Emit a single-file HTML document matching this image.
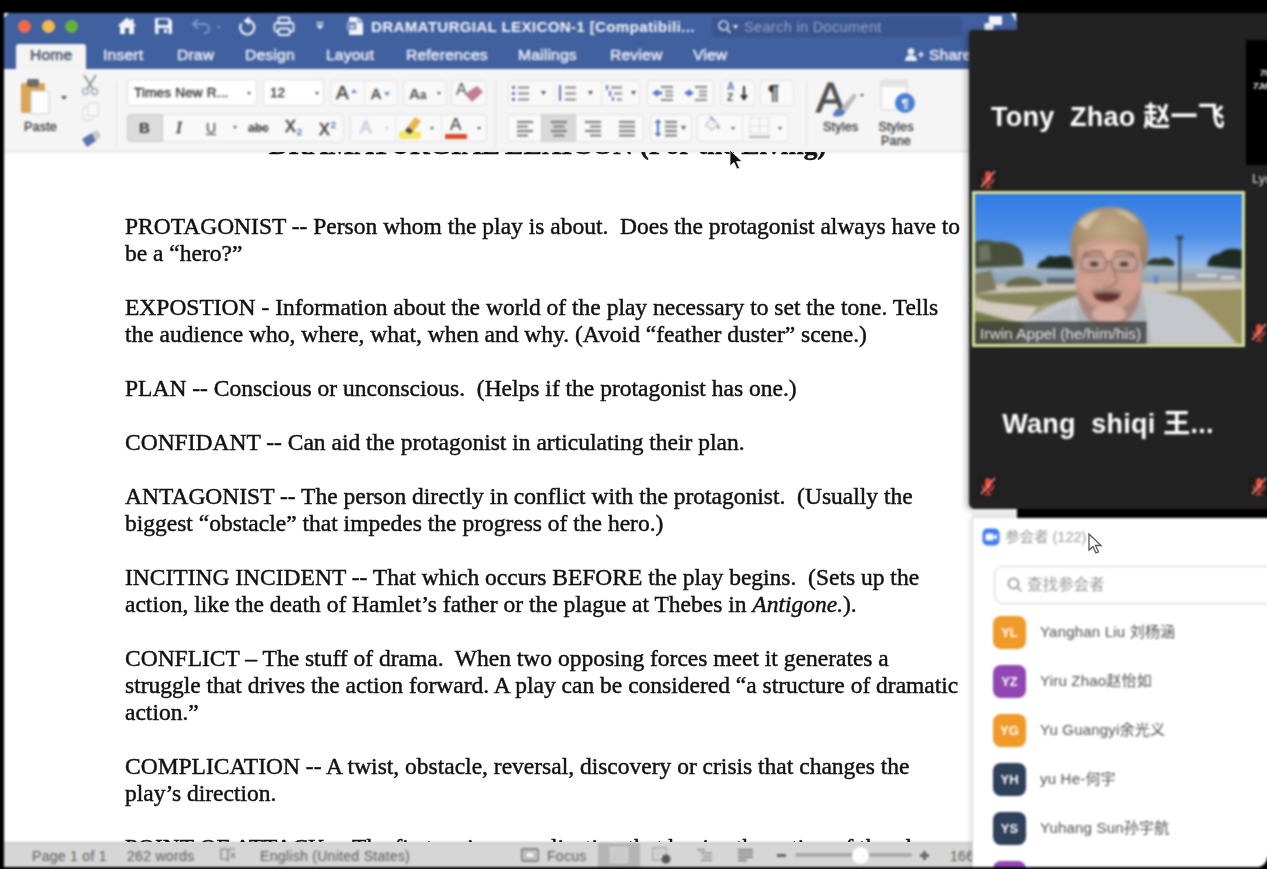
<!DOCTYPE html>
<html><head><meta charset="utf-8">
<title>Screen share</title>
<style>
html,body{margin:0;padding:0;background:#000;}
body{width:1267px;height:869px;position:relative;overflow:hidden;font-family:"Liberation Sans","Noto Sans CJK SC",sans-serif;}
.abs{position:absolute;}
#word{position:absolute;z-index:0;left:4px;top:13px;width:1013px;height:854px;background:#fff;overflow:hidden;}
#titlebar{position:absolute;left:0;top:0;width:1013px;height:56px;background:#40609f;}
.tl{position:absolute;top:7px;width:13px;height:13px;border-radius:50%;}
.tab{position:absolute;top:33px;color:#e4e9f3;font-size:15.5px;line-height:18px;font-weight:400;-webkit-text-stroke:0.5px #e4e9f3;white-space:nowrap;letter-spacing:0.25px;}
#hometab{position:absolute;left:12px;top:31px;width:70px;height:26px;background:#f4f4f4;border-radius:3px 3px 0 0;}
#ribbon{position:absolute;left:0;top:56px;width:1013px;height:84px;background:linear-gradient(#f5f5f6 0,#f5f5f6 81px,#e4e4e4 82px,#ececec 83px,#fafafa 84px);z-index:2;}
.grp{position:absolute;height:26px;background:#f9f9f9;border:1px solid #e1e1e1;border-radius:4px;box-sizing:border-box;}
.box{position:absolute;height:27px;background:#fff;border:1px solid #dcdcdc;border-radius:4px;box-sizing:border-box;}
.rt{position:absolute;color:#3a3a3a;white-space:nowrap;}
#doc{position:absolute;left:0;top:138px;width:1013px;height:692px;background:#fff;overflow:hidden;}
.ln{position:absolute;left:121px;margin-top:-1px;font-family:"Liberation Serif",serif;font-size:23.5px;line-height:27px;color:#111;white-space:pre;-webkit-text-stroke:0.45px #111;}
#status{position:absolute;left:0;top:829px;width:1013px;height:25px;background:#d6d6d6;border-top:1px solid #bdbdbd;}
.st{position:absolute;top:5px;font-size:14px;line-height:16px;color:#5e5e5e;white-space:nowrap;letter-spacing:0.3px;}

#vpanel{position:absolute;left:969px;top:30px;width:320px;height:479px;background:#222;border-radius:4px 0 0 6px;box-shadow:-2px 1px 6px rgba(0,0,0,0.35);}
#vtop{position:absolute;left:1017px;top:13px;width:280px;height:20px;background:#222;border-radius:0 0 0 0;}
.vname{position:absolute;left:0;width:278px;text-align:center;color:#fff;font-weight:700;font-size:27px;letter-spacing:0.25px;line-height:32px;white-space:pre;font-family:"Liberation Sans","Noto Sans CJK SC",sans-serif;}
#ppanel{position:absolute;left:972px;top:518px;width:325px;height:349px;background:#fff;border-left:1px solid #d8d8d8;box-shadow:-2px 0 5px rgba(0,0,0,0.12);overflow:hidden;box-sizing:border-box;}
.av{position:absolute;left:20px;width:33px;height:33px;border-radius:8px;color:#fff;font-weight:700;font-size:13px;line-height:33px;text-align:center;}
.pn{position:absolute;left:67px;font-size:15px;letter-spacing:0.2px;line-height:20px;color:#505050;white-space:nowrap;font-family:"Liberation Sans","Noto Sans CJK SC",sans-serif;}
</style></head>
<body><div id="all" style="position:absolute;left:0;top:0;width:1300px;height:869px;filter:blur(0.8px);">
<div id="word">
  <div id="titlebar">
    <div class="tl" style="left:14px;background:#f0694a;"></div>
    <div class="tl" style="left:38px;background:#f5b74e;"></div>
    <div class="tl" style="left:61px;background:#66b13c;"></div>
    
    <svg class="abs" style="left:112px;top:3px;" width="22" height="20" viewBox="0 0 22 20"><path d="M11 1.500 L1.500 10 L4 10 L4 18 L9 18 L9 12 L13 12 L13 18 L18 18 L18 10 L20.500 10 Z" fill="#f2f4f9"/><rect x="15" y="3" width="2.500" height="5" fill="#f2f4f9"/></svg>
    <svg class="abs" style="left:150px;top:4px;" width="19" height="18" viewBox="0 0 19 18"><path d="M1 2 q0 -1 1 -1 h13 l3 3 v12 q0 1 -1 1 h-15 q-1 0 -1 -1z" fill="#f2f4f9"/><rect x="4" y="2.500" width="10" height="5.500" fill="#40609f"/><rect x="4.500" y="11" width="10" height="6" fill="#40609f"/><rect x="10" y="12" width="3" height="4" fill="#f2f4f9"/></svg>
    <svg class="abs" style="left:187px;top:4px;" width="32" height="18" viewBox="0 0 32 18"><path d="M7 2 L2 7 L7 12 M2 7 H12 Q18 7 18 12 Q18 16 13 16" fill="none" stroke="#8097c6" stroke-width="1.800"/><circle cx="28" cy="10" r="1.300" fill="#8097c6"/></svg>
    <svg class="abs" style="left:233px;top:3px;" width="22" height="21" viewBox="0 0 22 21"><path d="M4.500 7.500 A7 7 0 1 0 11 4.500" fill="none" stroke="#f2f4f9" stroke-width="2.200"/><path d="M12.500 0.500 L6.500 4.800 L12.500 9 Z" fill="#f2f4f9"/></svg>
    <svg class="abs" style="left:269px;top:3px;" width="22" height="21" viewBox="0 0 22 21"><rect x="5.500" y="1.500" width="11" height="6" rx="1" fill="none" stroke="#f2f4f9" stroke-width="1.800"/><rect x="1.500" y="7" width="19" height="8.500" rx="2" fill="none" stroke="#f2f4f9" stroke-width="1.800"/><rect x="5.500" y="12.500" width="11" height="6.500" rx="1" fill="#40609f" stroke="#f2f4f9" stroke-width="1.800"/></svg>
    <svg class="abs" style="left:311px;top:8px;" width="10" height="10" viewBox="0 0 10 10"><rect x="1.500" y="1" width="7" height="1.600" fill="#dfe5f1"/><path d="M1 4 h8 l-4 4.500z" fill="#dfe5f1"/></svg>
    <svg class="abs" style="left:343px;top:3px;" width="18" height="20" viewBox="0 0 18 20"><path d="M3 1 h8 l5 5 v12 q0 1 -1 1 h-12 q-1 0 -1 -1 v-16 q0 -1 1 -1z" fill="#f2f4f9"/><path d="M11 1 v5 h5" fill="none" stroke="#40609f" stroke-width="1"/><rect x="0.500" y="6" width="9" height="8" rx="1" fill="#40609f" stroke="#f2f4f9" stroke-width="0.800"/><text x="5" y="12.500" font-size="6.500" font-weight="700" fill="#f2f4f9" text-anchor="middle" font-family="Liberation Sans, sans-serif">W</text></svg>
    <svg class="abs" style="left:980px;top:2px;" width="20" height="18" viewBox="0 0 20 18"><rect x="5" y="1" width="13" height="9" fill="#f2f4f9"/><rect x="0.500" y="8" width="9" height="7" rx="1" fill="#e8ecf5"/></svg>
    <svg class="abs" style="left:900px;top:33px;" width="22" height="18" viewBox="0 0 22 18"><circle cx="7" cy="5.500" r="3.300" fill="#e4e9f3"/><path d="M1 15 q0 -6 6 -6 q6 0 6 6z" fill="#e4e9f3"/><path d="M14 8.500 h6 M17 5.500 v6" stroke="#e4e9f3" stroke-width="1.700"/></svg>
    <div class="abs" style="left:0;top:0;width:0;height:0;border-top:5px solid #e8ecf5;border-right:5px solid transparent;"></div><div class="abs" style="left:1007px;top:0;width:0;height:0;border-top:9px solid #e8ecf5;border-left:5px solid transparent;"></div>
    <div id="hometab"></div>
    <div class="tab" style="left:26px;color:#4b5568;-webkit-text-stroke:0.5px #4b5568;">Home</div>
    <div class="tab" style="left:99px;">Insert</div>
    <div class="tab" style="left:173px;">Draw</div>
    <div class="tab" style="left:241px;">Design</div>
    <div class="tab" style="left:322px;">Layout</div>
    <div class="tab" style="left:402px;">References</div>
    <div class="tab" style="left:514px;">Mailings</div>
    <div class="tab" style="left:606px;">Review</div>
    <div class="tab" style="left:689px;">View</div>
    <div class="tab" style="left:925px;">Share</div>
    <div class="abs" style="left:367px;top:6px;color:#eef1f7;font-size:15px;line-height:16px;font-weight:700;letter-spacing:0.4px;white-space:nowrap;">DRAMATURGIAL LEXICON-1 [Compatibili...</div>
    <div class="abs" style="left:708px;top:4px;width:250px;height:20px;background:#3a5590;border-radius:4px;"></div>
    <div class="abs" style="left:740px;top:6px;color:#8fa2c8;font-size:14.5px;line-height:16px;letter-spacing:0.35px;white-space:nowrap;">Search in Document</div>
    <svg class="abs" style="left:713px;top:6px;" width="24" height="16" viewBox="0 0 24 16"><circle cx="6.500" cy="6.500" r="4.500" fill="none" stroke="#d5dcec" stroke-width="1.700"/><path d="M10 10 L13.500 14" stroke="#d5dcec" stroke-width="1.800"/><path d="M15.500 6 h6 l-3 4z" fill="#d5dcec"/></svg>
  </div>
  <div id="ribbon">
    <!-- paste -->
    <svg class="abs" style="left:14px;top:8px;" width="36" height="40" viewBox="0 0 36 40">
      <rect x="3" y="6" width="24" height="30" rx="2" fill="#d9a556"/>
      <rect x="9" y="2" width="12" height="8" rx="2" fill="#6d6d6d"/>
      <rect x="13" y="14" width="18" height="23" rx="1" fill="#fdfdfd" stroke="#cfcfcf" stroke-width="1"/>
    </svg>
    <div class="abs" style="left:57px;top:27px;width:0;height:0;border-left:3px solid transparent;border-right:3px solid transparent;border-top:4px solid #555;"></div>
    <div class="rt" style="left:20px;top:51px;font-size:12.5px;letter-spacing:0.2px;line-height:14px;-webkit-text-stroke:0.3px #3a3a3a;">Paste</div>
    <!-- scissors -->
    <svg class="abs" style="left:76px;top:5px;" width="20" height="22" viewBox="0 0 20 22">
      <path d="M4 1 L13 15 M16 1 L7 15" stroke="#8c8c8c" stroke-width="1.6" fill="none"/>
      <circle cx="5.5" cy="17.5" r="3" stroke="#9aa6bd" stroke-width="1.4" fill="none"/>
      <circle cx="14.5" cy="17.5" r="3" stroke="#9aa6bd" stroke-width="1.4" fill="none"/>
    </svg>
    <svg class="abs" style="left:77px;top:33px;" width="20" height="20" viewBox="0 0 20 20">
      <rect x="2" y="5" width="10" height="13" rx="1" fill="#f8f8f8" stroke="#dddddd" stroke-width="1.3"/>
      <rect x="7" y="1" width="10" height="13" rx="1" fill="#f8f8f8" stroke="#dddddd" stroke-width="1.3"/>
    </svg>
    <svg class="abs" style="left:76px;top:60px;" width="22" height="20" viewBox="0 0 22 20">
      <path d="M2 10 L12 4 L16 12 L7 18 Z" fill="#5c75a8"/>
      <path d="M12 4 L17 1 L21 7 L16 12 Z" fill="#c9c9c9"/>
    </svg>
    <div class="abs" style="left:112px;top:12px;width:1px;height:66px;background:#e3e3e3;"></div>
    <!-- font boxes -->
    <div class="box" style="left:123px;top:10px;width:130px;"></div>
    <div class="rt" style="left:130px;top:16px;font-size:13.5px;line-height:16px;letter-spacing:0.2px;color:#2c2c2c;-webkit-text-stroke:0.3px #2c2c2c;">Times New R...</div>
    <div class="abs" style="left:243px;top:23px;width:0;height:0;border-left:2.5px solid transparent;border-right:2.5px solid transparent;border-top:3.5px solid #555;"></div>
    <div class="box" style="left:259px;top:10px;width:61px;"></div>
    <div class="rt" style="left:266px;top:16px;font-size:13.5px;line-height:16px;color:#2c2c2c;-webkit-text-stroke:0.3px #2c2c2c;">12</div>
    <div class="abs" style="left:311px;top:23px;width:0;height:0;border-left:2.5px solid transparent;border-right:2.5px solid transparent;border-top:3.5px solid #555;"></div>
    <div class="grp" style="left:326px;top:11px;width:68px;"></div>
    <div class="rt" style="left:332px;top:13px;font-size:19px;line-height:22px;color:#444;-webkit-text-stroke:0.4px #444;">A</div>
    <div class="abs" style="left:347px;top:20px;width:0;height:0;border-left:3px solid transparent;border-right:3px solid transparent;border-bottom:4px solid #6c86b8;"></div>
    <div class="abs" style="left:360px;top:11px;width:1px;height:26px;background:#e6e6e6;"></div>
    <div class="rt" style="left:367px;top:16px;font-size:15px;line-height:18px;color:#444;-webkit-text-stroke:0.4px #444;">A</div>
    <div class="abs" style="left:380px;top:23px;width:0;height:0;border-left:3px solid transparent;border-right:3px solid transparent;border-top:4px solid #6c86b8;"></div>
    <div class="grp" style="left:399px;top:11px;width:44px;"></div>
    <div class="rt" style="left:405px;top:16px;font-size:15px;line-height:18px;color:#555;font-weight:700;">A<span style="font-size:12px">a</span></div>
    <div class="abs" style="left:433px;top:23px;width:0;height:0;border-left:2.5px solid transparent;border-right:2.5px solid transparent;border-top:3.5px solid #555;"></div>
    <div class="grp" style="left:447px;top:11px;width:36px;"></div>
    <div class="rt" style="left:452px;top:12px;font-size:16px;line-height:18px;color:#555;">A</div>
    <svg class="abs" style="left:459px;top:16px;" width="22" height="20" viewBox="0 0 22 20"><path d="M2 9 L14 1 L20 7 L9 17 Z" fill="#c27e92"/></svg>
    <div class="abs" style="left:491px;top:12px;width:1px;height:66px;background:#e3e3e3;"></div>
    <!-- row 2 -->
    <div class="grp" style="left:123px;top:45px;width:217px;height:28px;"></div>
    <div class="abs" style="left:123px;top:45px;width:36px;height:28px;background:#dcdcdc;border:1px solid #c9c9c9;border-radius:4px 0 0 4px;box-sizing:border-box;"></div>
    <div class="rt" style="left:135px;top:50px;font-size:15px;line-height:18px;font-weight:700;color:#3c3c3c;">B</div>
    <div class="rt" style="left:172px;top:49px;font-size:17px;line-height:20px;font-style:italic;font-family:'Liberation Serif',serif;color:#3c3c3c;-webkit-text-stroke:0.4px #3c3c3c;">I</div>
    <div class="rt" style="left:202px;top:50px;font-size:14px;line-height:18px;color:#3c3c3c;text-decoration:underline;">U</div>
    <div class="abs" style="left:229px;top:57px;width:0;height:0;border-left:2.5px solid transparent;border-right:2.5px solid transparent;border-top:3.5px solid #555;"></div>
    <div class="rt" style="left:244px;top:51px;font-size:12px;line-height:16px;font-weight:700;color:#4a4a4a;text-decoration:line-through;">abc</div>
    <div class="rt" style="left:281px;top:48px;font-size:16px;line-height:20px;color:#3c3c3c;-webkit-text-stroke:0.5px #3c3c3c;">X<span style="font-size:9px;color:#4c6db0;position:relative;top:3px;left:1px;-webkit-text-stroke:0.3px #4c6db0;">2</span></div>
    <div class="rt" style="left:315px;top:51px;font-size:16px;line-height:20px;color:#3c3c3c;-webkit-text-stroke:0.5px #3c3c3c;">X<span style="font-size:9px;color:#4c6db0;position:relative;top:-7px;left:1px;-webkit-text-stroke:0.3px #4c6db0;">2</span></div>
    <div class="grp" style="left:346px;top:45px;width:137px;height:28px;"></div>
    <div class="rt" style="left:356px;top:49px;font-size:17px;line-height:20px;color:#f4f4f8;-webkit-text-stroke:1px #c8cde0;">A</div>
    <div class="abs" style="left:381px;top:58px;width:0;height:0;border-left:2.5px solid transparent;border-right:2.5px solid transparent;border-top:3.5px solid #c4c4c4;"></div>
    <div class="abs" style="left:391px;top:45px;width:1px;height:28px;background:#e6e6e6;"></div>
    <svg class="abs" style="left:394px;top:46px;" width="28" height="26" viewBox="0 0 28 26">
      <rect x="1" y="16" width="22" height="8" rx="3" fill="#f3e765"/>
      <path d="M8 14 L17 2 L23 6 L14 18 Z" fill="#e9b44d"/>
      <path d="M7 16 L10 12 L15 16 L12 19 Z" fill="#444"/>
    </svg>
    <div class="abs" style="left:426px;top:58px;width:0;height:0;border-left:2.5px solid transparent;border-right:2.5px solid transparent;border-top:3.5px solid #555;"></div>
    <div class="abs" style="left:437px;top:45px;width:1px;height:28px;background:#e6e6e6;"></div>
    <div class="rt" style="left:446px;top:46px;font-size:17px;line-height:20px;color:#3c3c3c;">A</div>
    <div class="abs" style="left:441px;top:65px;width:22px;height:5px;background:#d9482b;border-radius:1px;"></div>
    <div class="abs" style="left:473px;top:58px;width:0;height:0;border-left:2.5px solid transparent;border-right:2.5px solid transparent;border-top:3.5px solid #555;"></div>
    <!-- paragraph group row1 -->
    <div class="grp" style="left:504px;top:11px;width:132px;"></div>
    <svg class="abs" style="left:506px;top:14px;" width="128" height="20" viewBox="0 0 128 20">
      <g fill="#5e78ae"><rect x="2" y="3" width="3" height="3"/><rect x="2" y="9" width="3" height="3"/><rect x="2" y="15" width="3" height="3"/></g>
      <g fill="#8a8a8a"><rect x="8" y="3.5" width="11" height="2"/><rect x="8" y="9.5" width="11" height="2"/><rect x="8" y="15.5" width="11" height="2"/></g>
      <path d="M31 8 l5 0 l-2.5 4z" fill="#555"/>
      <g fill="#5e78ae"><rect x="49" y="2" width="2" height="16"/></g>
      <g fill="#8a8a8a"><rect x="55" y="3.5" width="11" height="2"/><rect x="55" y="9.5" width="11" height="2"/><rect x="55" y="15.5" width="11" height="2"/></g>
      <path d="M78 8 l5 0 l-2.5 4z" fill="#555"/>
      <g fill="#5e78ae"><rect x="96" y="2" width="2" height="5"/><rect x="99" y="8" width="2" height="5"/><rect x="102" y="14" width="2" height="4"/></g>
      <g fill="#8a8a8a"><rect x="101" y="3.5" width="11" height="2"/><rect x="104" y="9.5" width="8" height="2"/><rect x="107" y="15.5" width="5" height="2"/></g>
      <path d="M121 8 l5 0 l-2.5 4z" fill="#555"/>
    </svg>
    <div class="abs" style="left:550px;top:11px;width:1px;height:26px;background:#e6e6e6;"></div>
    <div class="abs" style="left:597px;top:11px;width:1px;height:26px;background:#e6e6e6;"></div>
    <div class="grp" style="left:643px;top:11px;width:67px;"></div>
    <svg class="abs" style="left:645px;top:14px;" width="64" height="20" viewBox="0 0 64 20">
      <path d="M3 10 l6 -4 l0 8z" fill="#4f77c4"/><rect x="8" y="8.5" width="5" height="3" fill="#4f77c4"/>
      <g fill="#8a8a8a"><rect x="12" y="3" width="12" height="2"/><rect x="16" y="7.5" width="8" height="2"/><rect x="16" y="11.500" width="8" height="2"/><rect x="12" y="16" width="12" height="2"/></g>
      <path d="M45 10 l-6 -4 l0 8z" fill="#4f77c4"/><rect x="36" y="8.5" width="5" height="3" fill="#4f77c4"/>
      <g fill="#8a8a8a"><rect x="46" y="3" width="12" height="2"/><rect x="50" y="7.5" width="8" height="2"/><rect x="50" y="11.5" width="8" height="2"/><rect x="46" y="16" width="12" height="2"/></g>
    </svg>
    <div class="grp" style="left:717px;top:11px;width:34px;"></div>
    <div class="rt" style="left:723px;top:12px;font-size:10px;line-height:11px;color:#5e78ae;font-weight:700;">A</div>
    <div class="rt" style="left:723px;top:23px;font-size:10px;line-height:11px;color:#555;font-weight:700;">Z</div>
    <svg class="abs" style="left:734px;top:16px;" width="12" height="18" viewBox="0 0 12 18"><path d="M5 1 h2 v9 h3 l-4 6 l-4 -6 h3z" fill="#333"/></svg>
    <div class="grp" style="left:756px;top:11px;width:34px;"></div>
    <div class="rt" style="left:764px;top:12px;font-size:20px;line-height:22px;color:#333;font-weight:700;">¶</div>
    <!-- row 2 paragraph -->
    <div class="grp" style="left:503px;top:45px;width:137px;height:28px;"></div>
    <div class="abs" style="left:537px;top:45px;width:35px;height:28px;background:#d9d9d9;border:1px solid #cfcfcf;box-sizing:border-box;"></div>
    <svg class="abs" style="left:505px;top:48px;" width="134" height="22" viewBox="0 0 134 22">
      <g fill="#777"><rect x="8" y="4" width="16" height="2"/><rect x="8" y="8.500" width="11" height="2"/><rect x="8" y="13" width="16" height="2"/><rect x="8" y="17.500" width="11" height="2"/>
      <rect x="42" y="4" width="16" height="2"/><rect x="44.500" y="8.500" width="11" height="2"/><rect x="42" y="13" width="16" height="2"/><rect x="44.500" y="17.500" width="11" height="2"/>
      <rect x="76" y="4" width="16" height="2"/><rect x="81" y="8.500" width="11" height="2"/><rect x="76" y="13" width="16" height="2"/><rect x="81" y="17.500" width="11" height="2"/>
      <rect x="110" y="4" width="16" height="2"/><rect x="110" y="8.500" width="16" height="2"/><rect x="110" y="13" width="16" height="2"/><rect x="110" y="17.500" width="16" height="2"/></g>
    </svg>
    <div class="grp" style="left:646px;top:45px;width:42px;height:28px;"></div>
    <svg class="abs" style="left:648px;top:48px;" width="40" height="22" viewBox="0 0 40 22">
      <path d="M6 2 l3.500 4 h-7z M6 20 l3.500 -4 h-7z" fill="#4f77c4"/><rect x="5" y="5" width="2" height="12" fill="#4f77c4"/>
      <g fill="#777"><rect x="13" y="4" width="12" height="2"/><rect x="13" y="8.500" width="12" height="2"/><rect x="13" y="13" width="12" height="2"/><rect x="13" y="17.500" width="12" height="2"/></g>
      <path d="M29 9 l5 0 l-2.500 4z" fill="#555"/>
    </svg>
    <div class="grp" style="left:693px;top:45px;width:92px;height:28px;"></div>
    <svg class="abs" style="left:698px;top:46px;" width="21" height="19" viewBox="0 0 26 24">
      <path d="M4 12 L12 4 L20 12 L12 19 Z" fill="#f2f2f2" stroke="#b9b9b9" stroke-width="1.3"/>
      <path d="M10 2 L16 8" stroke="#7d96c9" stroke-width="2"/>
      <path d="M20 12 q3 4 1 6 q-3 0 -1 -6z" fill="#7d96c9"/>
    </svg>
    <div class="abs" style="left:727px;top:58px;width:0;height:0;border-left:2.5px solid transparent;border-right:2.5px solid transparent;border-top:3.5px solid #555;"></div>
    <div class="abs" style="left:738px;top:45px;width:1px;height:28px;background:#e6e6e6;"></div>
    <svg class="abs" style="left:744px;top:48px;" width="24" height="22" viewBox="0 0 24 22">
      <rect x="2" y="1" width="19" height="16" fill="none" stroke="#e0e0e0" stroke-width="1.2"/>
      <path d="M11.500 1 v16 M2 9 h19" stroke="#e0e0e0" stroke-width="1.2"/>
      <rect x="1" y="19" width="21" height="2" fill="#b5b5b5"/>
    </svg>
    <div class="abs" style="left:774px;top:58px;width:0;height:0;border-left:2.5px solid transparent;border-right:2.5px solid transparent;border-top:3.5px solid #555;"></div>
    <div class="abs" style="left:802px;top:12px;width:1px;height:66px;background:#e3e3e3;"></div>
    <!-- styles -->
    <div class="rt" style="left:812px;top:5px;font-size:43px;line-height:46px;color:#505050;-webkit-text-stroke:1px #505050;">A</div>
    <svg class="abs" style="left:826px;top:20px;" width="30" height="30" viewBox="0 0 30 30">
      <path d="M10 20 L24 4 L27 7 L15 24 Z" fill="#bdbdbd"/>
      <path d="M3 27 q1 -8 8 -8 l4 4 q-2 6 -12 4z" fill="#5a78b8"/>
    </svg>
    <div class="abs" style="left:856px;top:25px;width:0;height:0;border-left:2.5px solid transparent;border-right:2.5px solid transparent;border-top:3.5px solid #555;"></div>
    <div class="rt" style="left:819px;top:51px;font-size:12.5px;letter-spacing:0.2px;line-height:14px;-webkit-text-stroke:0.3px #3a3a3a;">Styles</div>
    <svg class="abs" style="left:875px;top:9px;" width="38" height="38" viewBox="0 0 38 38">
      <rect x="2" y="2" width="26" height="30" rx="3" fill="#fbfbfb" stroke="#d5d5d5" stroke-width="1.2"/>
      <path d="M2 8 h26" stroke="#d5d5d5" stroke-width="1.2"/><rect x="2.500" y="2.500" width="25" height="5" rx="2" fill="#e3e3e3"/>
      <circle cx="26" cy="25" r="10" fill="#4a80d4"/>
      <text x="26" y="30" font-size="13" font-weight="700" fill="#fff" text-anchor="middle" font-family="Liberation Sans, sans-serif">¶</text>
    </svg>
    <div class="rt" style="left:872px;top:51px;width:40px;text-align:center;font-size:12.5px;letter-spacing:0.2px;line-height:14px;-webkit-text-stroke:0.3px #3a3a3a;">Styles<br>Pane</div>
  </div>
  <div id="doc"></div>
  <div id="status">
    <div class="st" style="left:28px;">Page 1 of 1</div>
    <div class="st" style="left:123px;">262 words</div>
    <svg class="abs" style="left:215px;top:4px;" width="20" height="16" viewBox="0 0 20 16"><path d="M2 2 h5 l2 1.500 v10 l-2 -1.500 h-5z M16 2 h-5 l-2 1.500" fill="none" stroke="#777" stroke-width="1.2"/><path d="M12 6 l4 5 M16 6 l-4 5" stroke="#777" stroke-width="1.2"/></svg>
    <div class="st" style="left:256px;">English (United States)</div>
    <svg class="abs" style="left:517px;top:5px;" width="18" height="14" viewBox="0 0 18 14"><rect x="1" y="1" width="16" height="12" rx="1" fill="none" stroke="#666" stroke-width="1.400"/><rect x="4.500" y="4" width="9" height="6" fill="#f4f4f4" stroke="#777" stroke-width="0.800"/></svg>
    <div class="st" style="left:543px;">Focus</div>
    <div class="abs" style="left:594px;top:0;width:42px;height:25px;background:#b5b5b5;"></div>
    <div class="abs" style="left:606px;top:4px;width:18px;height:16px;background:#c9c9c9;border:1px solid #dcdcdc;box-sizing:border-box;"></div>
    <svg class="abs" style="left:648px;top:4px;" width="20" height="18" viewBox="0 0 20 18"><rect x="1" y="1" width="13" height="12" fill="#e9e9e9" stroke="#888" stroke-width="1"/><path d="M3 4 h9 M3 7 h9 M3 10 h5" stroke="#999" stroke-width="1"/><circle cx="14" cy="12" r="4.500" fill="#555"/></svg>
    <svg class="abs" style="left:692px;top:5px;" width="18" height="15" viewBox="0 0 18 15"><g fill="#8d8d8d"><rect x="1" y="1" width="8" height="1.500"/><rect x="5" y="4.500" width="11" height="1.500"/><rect x="7" y="8" width="9" height="1.500"/><rect x="5" y="11.500" width="11" height="1.500"/></g></svg>
    <svg class="abs" style="left:733px;top:5px;" width="18" height="15" viewBox="0 0 18 15"><g fill="#7d7d7d"><rect x="1" y="1" width="15" height="1.800"/><rect x="1" y="4.500" width="15" height="1.800"/><rect x="1" y="8" width="15" height="1.800"/><rect x="1" y="11.500" width="9" height="1.800"/></g></svg>
    <div class="abs" style="left:773px;top:11px;width:9px;height:2.500px;background:#666;"></div>
    <div class="abs" style="left:791px;top:10px;width:117px;height:4px;background:#a9a9a9;border-radius:2px;"></div>
    <div class="abs" style="left:848px;top:4px;width:17px;height:17px;background:#fdfdfd;border-radius:50%;"></div>
    <div class="abs" style="left:916px;top:11px;width:9px;height:2.500px;background:#666;"></div>
    <div class="abs" style="left:919.250px;top:7.500px;width:2.500px;height:9px;background:#666;"></div>
    <div class="st" style="left:946px;">166%</div>
  </div>
</div>

<div id="vtop"></div>
<div id="vpanel">
  <div class="vname" style="top:71px;">Tony  Zhao 赵一飞</div>
  <div class="vname" style="top:378px;">Wang  shiqi 王...</div>
  <div class="abs" style="left:277px;top:10px;width:43px;height:125px;background:#000;"></div>
  <div class="abs" style="left:291px;top:38px;color:#fff;font-size:9px;line-height:10px;white-space:nowrap;font-weight:700;font-style:italic;">7I</div><div class="abs" style="left:284px;top:51px;color:#fff;font-size:9px;line-height:10px;white-space:nowrap;font-weight:700;font-style:italic;">7Jd</div>
  <div class="abs" style="left:283px;top:141px;color:#ddd;font-size:13px;line-height:16px;white-space:nowrap;">Lyc</div>
  <svg class="abs" style="left:8px;top:138px;" width="22" height="22" viewBox="0 0 22 22"><rect x="0" y="0" width="22" height="22" fill="#1e1e1e"/><rect x="8" y="3" width="6" height="11" rx="3" fill="#e2483d"/><path d="M5.500 10 q0 6 5.500 6 q5.500 0 5.500 -6 M11 16 v3 M7.500 19.500 h7" stroke="#e2483d" stroke-width="1.500" fill="none"/><path d="M4 19 L18 3" stroke="#f08a80" stroke-width="1.800"/></svg><svg class="abs" style="left:279px;top:291px;" width="22" height="22" viewBox="0 0 22 22"><rect x="0" y="0" width="22" height="22" fill="#1e1e1e"/><rect x="8" y="3" width="6" height="11" rx="3" fill="#e2483d"/><path d="M5.500 10 q0 6 5.500 6 q5.500 0 5.500 -6 M11 16 v3 M7.500 19.500 h7" stroke="#e2483d" stroke-width="1.500" fill="none"/><path d="M4 19 L18 3" stroke="#f08a80" stroke-width="1.800"/></svg><svg class="abs" style="left:8px;top:445px;" width="22" height="22" viewBox="0 0 22 22"><rect x="0" y="0" width="22" height="22" fill="#1e1e1e"/><rect x="8" y="3" width="6" height="11" rx="3" fill="#e2483d"/><path d="M5.500 10 q0 6 5.500 6 q5.500 0 5.500 -6 M11 16 v3 M7.500 19.500 h7" stroke="#e2483d" stroke-width="1.500" fill="none"/><path d="M4 19 L18 3" stroke="#f08a80" stroke-width="1.800"/></svg><svg class="abs" style="left:279px;top:445px;" width="22" height="22" viewBox="0 0 22 22"><rect x="0" y="0" width="22" height="22" fill="#1e1e1e"/><rect x="8" y="3" width="6" height="11" rx="3" fill="#e2483d"/><path d="M5.500 10 q0 6 5.500 6 q5.500 0 5.500 -6 M11 16 v3 M7.500 19.500 h7" stroke="#e2483d" stroke-width="1.500" fill="none"/><path d="M4 19 L18 3" stroke="#f08a80" stroke-width="1.800"/></svg>
  <div id="cam" class="abs" style="left:3px;top:161px;width:273px;height:156px;background:#d5df9c;">
    <svg class="abs" style="left:3px;top:3px;" width="267" height="150" viewBox="0 0 267 150">
      <defs>
        <linearGradient id="sky" x1="0" y1="0" x2="0" y2="1"><stop offset="0" stop-color="#2f7be3"/><stop offset="0.55" stop-color="#4f8fe8"/><stop offset="1" stop-color="#9cc2ef"/></linearGradient>
        <linearGradient id="wat" x1="0" y1="0" x2="0" y2="1"><stop offset="0" stop-color="#a9bdd0"/><stop offset="1" stop-color="#7f93a8"/></linearGradient>
        <radialGradient id="hair" cx="0.5" cy="0.35" r="0.7"><stop offset="0" stop-color="#c3ad8b"/><stop offset="1" stop-color="#96795a"/></radialGradient>
        <filter id="bl" x="-5%" y="-5%" width="110%" height="110%"><feGaussianBlur stdDeviation="1.100"/></filter>
        <filter id="bl2" x="-10%" y="-10%" width="120%" height="120%"><feGaussianBlur stdDeviation="1.800"/></filter>
        <filter id="bl3" x="-20%" y="-20%" width="140%" height="140%"><feGaussianBlur stdDeviation="2.600"/></filter>
        <clipPath id="cp"><rect x="0" y="0" width="267" height="150"/></clipPath>
      </defs>
      <g clip-path="url(#cp)">
      <rect x="0" y="0" width="267" height="76" fill="url(#sky)"/>
      <rect x="0" y="71" width="267" height="22" fill="url(#wat)"/>
      <rect x="0" y="89" width="267" height="61" fill="#a59c7c"/>
      <g filter="url(#bl)">
        <!-- ground -->
        <path d="M0 91 L110 89 L267 88 L267 97 L150 100 L0 101 Z" fill="#cdc5b6"/>
        <path d="M0 100 L110 96 L110 103 L60 112 L10 108 Z" fill="#85865a"/>
        <path d="M0 104 L14 108 L62 113 L52 130 L0 118 Z" fill="#d3cbc0"/>
        <path d="M0 117 L52 131 L30 150 L0 150 Z" fill="#737a45"/>
        <path d="M190 97 L267 95 L267 150 L262 150 Z" fill="#9b9163"/>
        <path d="M0 80 L16 76 L22 96 L0 100 Z" fill="#7b7a62"/>
        <path d="M32 88 Q48 78 66 88 L68 92 L30 93 Z" fill="#696a4e"/>
        <rect x="72" y="84" width="28" height="6" fill="#5a6470"/>
        <!-- trees -->
        <path d="M0 48 Q8 44 20 48 Q32 46 44 54 Q50 62 48 72 L0 74 Z" fill="#46503a"/>
        <path d="M4 52 L14 50 L16 66 L4 68 Z" fill="#7c8172" opacity="0.700"/>
        <path d="M62 74 Q64 66 70 66 Q72 60 80 63 Q90 60 98 64 L99 75 Z" fill="#1f2a22"/>
        <path d="M170 71 Q176 62 184 65 Q192 61 199 68 L199 72 Z" fill="#2d3a2c"/>
        <path d="M232 72 Q234 60 244 60 Q252 52 267 56 L267 75 Z" fill="#1f2b20"/>
        <!-- beach & boats -->
        <path d="M212 80 L267 78 L267 88 L196 89 Z" fill="#9aa0a4"/>
        <path d="M222 80 h20 v3 h-20z M246 82 h14 v3 h-14z" fill="#d6d8da"/>
        <rect x="179" y="82" width="4" height="8" fill="#5b86c4"/>
        <!-- lamp -->
        <rect x="203.800" y="43" width="2.200" height="54" fill="#2f3a45"/><path d="M200.500 42 h8.500 l-2 3.500 h-4.500z" fill="#2f3a45"/>
      </g>
      <!-- shirt -->
      <g filter="url(#bl2)">
        <path d="M46 150 L50 127 Q70 112 98 103 L168 95 Q200 100 216 105 Q240 124 262 150 Z" fill="#c4c7cc"/>
        <path d="M100 110 L126 140 L150 132 L168 100 L176 150 L104 150 Z" fill="#aeb3ba"/>
        <path d="M60 126 L96 110 L100 150 L56 150 Z" fill="#b9bdc4"/>
      </g>
      <!-- head -->
      <g filter="url(#bl2)">
        <path d="M100 76 Q90 44 102 28 Q112 14 134 13 Q158 12 168 30 Q178 48 169 78 L162 52 Q134 40 106 52 Z" fill="url(#hair)"/>
        <path d="M103 30 Q112 18 126 18 Q118 26 112 36 Z M140 16 Q156 16 164 30 Q152 24 140 16 Z" fill="#d2c1a3"/>
        <path d="M103 52 Q134 36 164 52 L167 86 Q167 114 152 128 Q134 138 116 128 Q100 114 101 86 Z" fill="#cb9c8d"/>
        <path d="M102 92 Q102 118 118 130 Q134 138 150 130 Q166 116 166 92 Q156 116 134 116 Q112 116 102 92 Z" fill="#a9877f"/>
        <ellipse cx="134" cy="120" rx="17" ry="9" fill="#d6aca1"/>
        <ellipse cx="134" cy="58" rx="22" ry="8" fill="#d8ab9a"/>
        <ellipse cx="112" cy="88" rx="8" ry="7" fill="#d49f92"/>
        <ellipse cx="157" cy="88" rx="8" ry="7" fill="#d49f92"/>
      </g>
      <g filter="url(#bl)">
        <rect x="106" y="62" width="25" height="15" rx="6" fill="#c3a69c" fill-opacity="0.500" stroke="#80655f" stroke-width="1.300"/>
        <rect x="137" y="62" width="25" height="15" rx="6" fill="#c3a69c" fill-opacity="0.500" stroke="#80655f" stroke-width="1.300"/>
        <path d="M131 68 h6" stroke="#80655f" stroke-width="1.300"/>
        <ellipse cx="119" cy="70" rx="4.500" ry="2.600" fill="#4a3833"/>
        <ellipse cx="149" cy="70" rx="4.500" ry="2.600" fill="#4a3833"/>
        <path d="M108 61 q10 -6 21 -2 M139 59 q11 -4 21 2" stroke="#8b6f5c" stroke-width="2.200" fill="none"/>
        <path d="M138 76 q6 10 1 15 q-6 3 -11 0" stroke="#aa786c" stroke-width="2" fill="none"/>
        <path d="M116 97 Q132 92 148 97 L146 100 Q132 97 118 100 Z" fill="#9a7f78"/>
        <path d="M118 100 Q132 97 146 100 Q143 108 132 108 Q121 108 118 100 Z" fill="#64332f"/>
      </g>
      <rect x="0" y="127.500" width="171.500" height="22.500" fill="#3d3d3d" opacity="0.780"/>
      <text x="5" y="144.500" font-size="15.500" fill="#e2e2e2" font-family="Liberation Sans, sans-serif">Irwin Appel (he/him/his)</text>
      </g>
    </svg>
  </div>
</div>
<div class="abs" style="left:972px;top:509px;width:45px;height:10px;background:#ececec;"></div>
<div class="abs" style="left:1257px;top:857px;width:12px;height:10px;z-index:3;background:radial-gradient(circle at 0 0,rgba(0,0,0,0) 9.500px,#000 10.500px);"></div>
<div id="ppanel">
  <svg class="abs" style="left:9px;top:10px;" width="18" height="18" viewBox="0 0 18 18"><rect x="0.500" y="0.500" width="17" height="17" rx="5" fill="#3f7bf2"/><rect x="3.500" y="5.500" width="8" height="7" rx="1.500" fill="#fff"/><path d="M12 8 l3 -2 v6 l-3 -2z" fill="#fff"/></svg>
  <div class="abs" style="left:32px;top:10px;font-size:14.5px;line-height:18px;color:#9a9a9a;white-space:nowrap;">参会者 (122)</div>
  <div class="abs" style="left:21px;top:48px;width:340px;height:38px;border:1px solid #cfcfcf;border-radius:9px;box-sizing:border-box;"></div>
  <svg class="abs" style="left:34px;top:59px;" width="16" height="16" viewBox="0 0 16 16"><circle cx="6.500" cy="6.500" r="5" fill="none" stroke="#8a8a8a" stroke-width="1.500"/><path d="M10.500 10.500 L14.500 14.500" stroke="#8a8a8a" stroke-width="1.500"/></svg>
  <div class="abs" style="left:54px;top:57px;font-size:15.500px;line-height:20px;color:#9a9a9a;white-space:nowrap;">查找参会者</div>
  <div class="av" style="top:98px;background:#f09a2a;">YL</div><div class="pn" style="top:104px;">Yanghan Liu 刘杨涵</div>
  <div class="av" style="top:147px;background:#9147b3;">YZ</div><div class="pn" style="top:153px;">Yiru Zhao赵怡如</div>
  <div class="av" style="top:196px;background:#f09a2a;">YG</div><div class="pn" style="top:202px;">Yu Guangyi余光义</div>
  <div class="av" style="top:245px;background:#2e405a;">YH</div><div class="pn" style="top:251px;">yu He-何宇</div>
  <div class="av" style="top:294px;background:#2e405a;">YS</div><div class="pn" style="top:300px;">Yuhang Sun孙宇航</div>
  <div class="av" style="top:343px;background:#9147b3;"></div>
</div>

</div>
<div id="doctext" style="position:absolute;left:4px;top:151px;width:962px;height:691px;overflow:hidden;clip-path:inset(1px 0 0 0);">
<div class="ln" style="left:265px;top:-18.5px;font-weight:700;font-size:27.4px;line-height:27px;">DRAMATURGIAL LEXICON (For the Living)</div>
<div class="ln" style="top:63px;">PROTAGONIST -- Person whom the play is about.  Does the protagonist always have to</div>
<div class="ln" style="top:90px;">be a “hero?”</div>
<div class="ln" style="top:144px;">EXPOSTION - Information about the world of the play necessary to set the tone. Tells</div>
<div class="ln" style="top:171px;">the audience who, where, what, when and why. (Avoid “feather duster” scene.)</div>
<div class="ln" style="top:225px;">PLAN -- Conscious or unconscious.  (Helps if the protagonist has one.)</div>
<div class="ln" style="top:279px;">CONFIDANT -- Can aid the protagonist in articulating their plan.</div>
<div class="ln" style="top:333px;">ANTAGONIST -- The person directly in conflict with the protagonist.  (Usually the</div>
<div class="ln" style="top:360px;">biggest “obstacle” that impedes the progress of the hero.)</div>
<div class="ln" style="top:414px;">INCITING INCIDENT -- That which occurs BEFORE the play begins.  (Sets up the</div>
<div class="ln" style="top:441px;">action, like the death of Hamlet’s father or the plague at Thebes in <i>Antigone.</i>).</div>
<div class="ln" style="top:495px;">CONFLICT – The stuff of drama.  When two opposing forces meet it generates a</div>
<div class="ln" style="top:522px;">struggle that drives the action forward. A play can be considered “a structure of dramatic</div>
<div class="ln" style="top:549px;">action.”</div>
<div class="ln" style="top:603px;">COMPLICATION -- A twist, obstacle, reversal, discovery or crisis that changes the</div>
<div class="ln" style="top:630px;">play’s direction.</div>
<div class="ln" style="top:684px;">POINT OF ATTACK -- The first major complication that begins the action of the play</div>
</div>
<svg class="abs" style="left:1087px;top:532px;" width="18" height="24" viewBox="0 0 18 24"><path d="M2 2 L2 18 L6 14.500 L9 21 L11.500 20 L8.500 13.500 L14 13.500 Z" fill="#fff" stroke="#555" stroke-width="1.300"/></svg>
<svg class="abs" style="left:728px;top:148px;" width="16" height="24" viewBox="0 0 16 24"><path d="M2 2 L2 18 L6 14.500 L9 21 L11.500 20 L8.500 13.500 L14 13.500 Z" fill="#111" stroke="#eee" stroke-width="0.800"/></svg>
</body></html>
